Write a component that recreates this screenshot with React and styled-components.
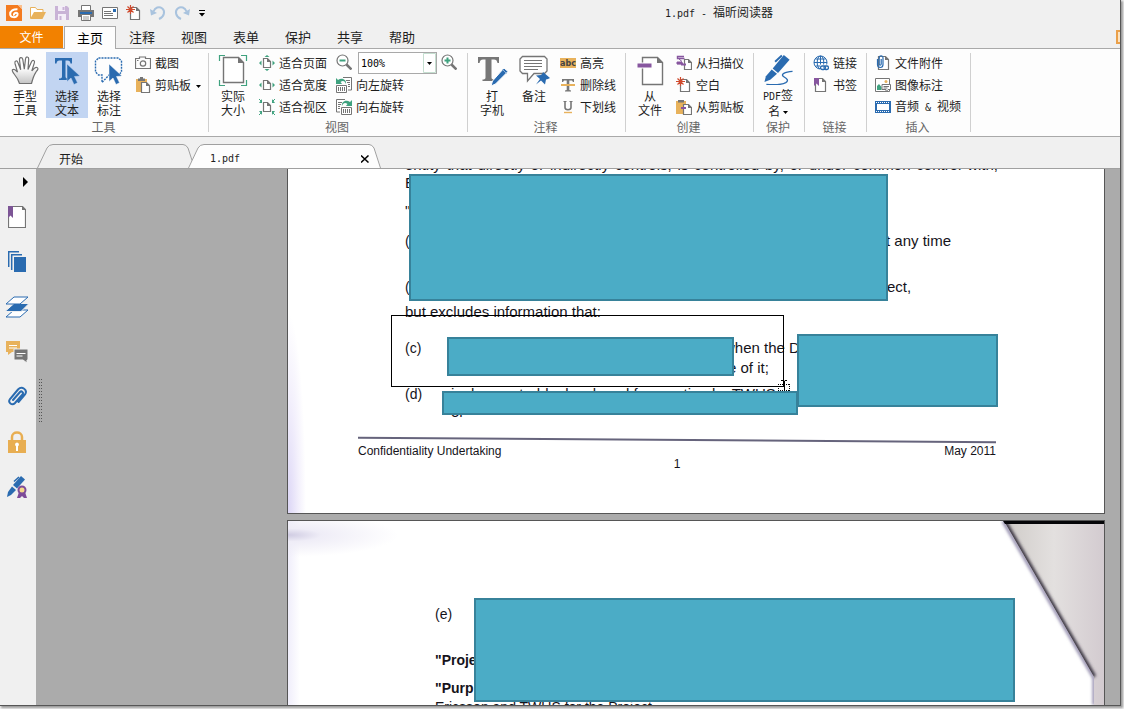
import React from 'react';
import styled, { createGlobalStyle, css } from 'styled-components';

const GlobalStyle = createGlobalStyle`
  *, *::before, *::after {
    box-sizing: border-box;
  }

  body {
    margin: 0;
    background: #f4f4f4;
    overflow: hidden;
    font-family: 'Noto Sans CJK SC', sans-serif;
    font-size: 12px;
    color: #1e1e1e;
  }

  button {
    margin: 0;
    padding: 0;
    border: none;
    background: none;
    font: inherit;
    color: inherit;
  }
`;

const green = '#3fa27f';
const blue = '#2a6bb0';
const gray = '#757575';
const tan = '#e8b25c';
const purple = '#87569f';

const Window = styled.div`
  display: flex;
  flex-direction: column;
  height: calc(100vh - 4px);
  margin: 0 4px 4px 0;
  background: #f0f0f0;
  box-shadow: 0 0 0 1px #565656, 2px 2px 2px 1px #9a9a9a;
`;

const Mono = styled.span`
  font-family: 'DejaVu Sans Mono', monospace;
  font-size: 10px;
`;

const TitleBar = styled.header`
  display: flex;
  align-items: center;
  height: 26px;
  padding-left: 2px;
`;

const QuickButton = styled.button`
  display: flex;
  align-items: center;
  justify-content: center;
  width: ${({ $narrow }) => ($narrow ? '16px' : '24px')};
  height: 24px;
`;

const Title = styled.h1`
  flex: 1;
  margin: 0;
  padding-left: 108px;
  font-size: 12px;
  font-weight: 400;
  line-height: 24px;
  text-align: center;
  white-space: pre;
`;

const MenuBar = styled.nav`
  display: flex;
  height: 22px;
`;

const MenuTab = styled.button`
  width: 52px;
  height: 22px;
  font-size: 13px;
  line-height: 22px;

  ${({ $active }) =>
    $active &&
    css`
      position: relative;
      height: 23px;
      border: 1px solid #a9a9a9;
      border-bottom: none;
      background: #fdfdfd;
      color: #000;
    `}
`;

const FileTab = styled(MenuTab)`
  width: 63px;
  margin-right: 1px;
  background: #f28100;
  color: #fff;
  font-size: 12px;
`;

const AccountBadge = styled.span`
  width: 4px;
  height: 14px;
  margin: 4px 0 0 auto;
  border: 2px solid #eaa04a;
  border-right: none;
  background: #fbe3c2;
`;

const Ribbon = styled.section`
  display: flex;
  padding-left: 1px;
  border-top: 1px solid #a9a9a9;
  border-bottom: 1px solid #a9a9a9;
  background: #fdfdfd;
`;

const Group = styled.div`
  display: flex;
  flex-direction: column;
  flex: 0 0 ${({ $width }) => $width}px;
  padding: 3px 0 0 3px;
  background: linear-gradient(#d0d0d0, #d0d0d0) right 4px / 1px 79px no-repeat;
`;

const GroupBody = styled.div`
  display: flex;
  height: 66px;
`;

const GroupLabel = styled.div`
  height: 18px;
  padding-right: 6px;
  color: #666;
  line-height: 18px;
  text-align: center;
`;

const Column = styled.div`
  display: flex;
  flex-direction: column;
`;

const BigButton = styled.button`
  display: flex;
  flex-direction: column;
  align-items: center;
  gap: 3px;
  width: 42px;
  height: 66px;
  padding-top: 2px;
  line-height: 14px;
  background: ${({ $active }) => ($active ? '#c2d5f2' : 'none')};
`;

const SmallButton = styled.button`
  display: flex;
  align-items: center;
  gap: 4px;
  height: 22px;
  padding: 0 4px 0 5px;
  line-height: 22px;
  white-space: pre;

  svg {
    flex: none;
  }
`;

const ZoomRow = styled.div`
  display: flex;
  align-items: center;
  height: 22px;
  padding-left: 5px;
`;

const ZoomBox = styled.div`
  position: relative;
  width: 79px;
  height: 22px;
  margin: 0 4px 0 6px;
  border: 1px solid #a9a9a9;
  background: #fff;

  svg {
    position: absolute;
    top: 0;
    right: 0;
    pointer-events: none;
  }
`;

const ZoomSelect = styled.select`
  width: 100%;
  height: 20px;
  padding: 0 2px;
  border: none;
  background: none;
  appearance: none;
  color: #000;
  font-family: 'DejaVu Sans Mono', monospace;
  font-size: 10px;
`;

const TabStrip = styled.div`
  display: flex;
  align-items: flex-end;
  height: 32px;
  padding-left: 37px;
  border-bottom: 1px solid #a0a0a0;
`;

const DocTabBox = styled.div`
  position: relative;
  display: flex;
  height: 24px;
  color: ${({ $active }) => ($active ? '#fdfdfd' : '#f0f0f0')};

  & + & {
    margin-left: -7px;
  }

  svg {
    display: block;
  }
`;

const DocTabBody = styled.div`
  display: flex;
  align-items: center;
  justify-content: space-between;
  width: ${({ $width }) => $width}px;
  padding: 4px 0 0 6px;
  border-top: 1px solid #a0a0a0;
  background: currentColor;

  span,
  button {
    color: #1e1e1e;
  }
`;

const Workspace = styled.main`
  display: flex;
  flex: 1;
  min-height: 0;
  background: #ababab;
`;

const Sidebar = styled.aside`
  display: flex;
  flex-direction: column;
  width: 36px;
  background: #f0f0f0;
`;

const SideButton = styled.button`
  display: flex;
  align-items: center;
  justify-content: ${({ $small }) => ($small ? 'flex-end' : 'center')};
  width: 34px;
  height: ${({ $small }) => ($small ? '25px' : '45px')};
  padding-right: ${({ $small }) => ($small ? '6px' : '0')};
`;

const Splitter = styled.div`
  width: 6px;
  padding: 210px 0 0 3px;
`;

const SplitterGrip = styled.div`
  width: 3px;
  height: 44px;
  background: repeating-linear-gradient(#555 0 1px, transparent 1px 3px);
  mask: linear-gradient(90deg, #000 1px, transparent 1px 2px, #000 2px);
`;

const Pages = styled.div`
  display: flex;
  flex: 1;
  flex-direction: column;
  align-items: flex-end;
  padding-right: 15px;
  overflow: hidden;
`;

const Page = styled.article`
  position: relative;
  width: 818px;
  overflow: hidden;
  border: 1px solid #565656;
  background: #fff;
  color: #15131a;
  font-family: 'Liberation Sans', Arial, sans-serif;
`;

const FirstPage = styled(Page)`
  flex: 0 0 345px;
  border-top: none;
  background: radial-gradient(ellipse 18px 200px at 0 100%, #dcd6f6, #f3f0fc 60%, #fff);
`;

const SecondPage = styled(Page)`
  flex: 1;
  margin-top: 6px;
  padding: 84px 0 0 147px;
  border-bottom: none;
  background: radial-gradient(ellipse 110px 22px at 0 14px, #cfcbe2, #efedf7 30%, transparent),
    linear-gradient(90deg, #f0eefb, #fff 12px);
`;

/* the first page is scrolled, its top line is cut by the tab strip */
const Body = styled.div`
  margin: -13px 106px 0 117px;
  font-size: 15px;
`;

const Line = styled.div`
  display: flex;
  height: 18px;
  margin-top: ${({ $gap = 0 }) => $gap}px;
  font-size: ${({ $small }) => ($small ? '14px' : '15px')};
  line-height: 18px;
  white-space: pre;
`;

const FullLine = styled.div`
  height: 18px;
  line-height: 18px;
  text-align: justify;
  text-align-last: justify;
`;

const Label = styled.span`
  width: 46px;
  font-size: 14px;
`;

const Fragment = styled.span`
  margin-left: ${({ $indent = 0 }) => $indent}px;
`;

const PageRule = styled.hr`
  height: 2px;
  margin: 18px 108px 0 70px;
  border: none;
  background: #66647c;
  transform: rotate(0.4deg);
`;

const PageFooter = styled.footer`
  display: flex;
  justify-content: space-between;
  align-items: flex-end;
  margin: 3px 108px 0 70px;
  font-size: 12px;
  line-height: 14px;
`;

const PageNumber = styled.div`
  margin: -1px 108px 0 70px;
  font-size: 12px;
  line-height: 14px;
  text-align: center;
`;

const Redaction = styled.div`
  position: absolute;
  left: ${({ $x }) => $x}px;
  top: ${({ $y }) => $y}px;
  width: ${({ $w }) => $w}px;
  height: ${({ $h }) => $h}px;
  border: 2px solid #37829a;
  background: #4bacc6;
`;

const Marquee = styled.div`
  position: absolute;
  left: 103px;
  top: 146px;
  width: 393px;
  height: 72px;
  border: 1px solid #000;
`;

const Pointer = styled.svg`
  position: absolute;
  left: 489px;
  top: 210px;
`;

const Fold = styled.svg`
  position: absolute;
  top: 0;
  right: 0;
`;

const InlineCaret = styled.svg`
  vertical-align: middle;
`;

const Icon = ({ size = 16, width, height, children }) => (
  <svg
    width={width || size}
    height={height || size}
    viewBox={`0 0 ${width || size} ${height || size}`}
    fill="none"
    aria-hidden="true"
  >
    {children}
  </svg>
);

const Caret = () => (
  <InlineCaret width="5" height="3" viewBox="0 0 5 3" aria-hidden="true">
    <path d="M0 0h5L2.500 3z" fill="#000" />
  </InlineCaret>
);

/* small sheet with a folded corner, shared by several icons */
const Sheet = ({ x = 4, y = 1, w = 10, h = 13, fill = '#fff' }) => (
  <>
    <path
      d={`M${x + 0.5} ${y + 0.5}h${w - 4}l3 3v${h - 4}h${-(w - 1)}z`}
      fill={fill}
      stroke={gray}
      strokeWidth="1.2"
    />
    <path d={`M${x + w - 4} ${y}v4h4z`} fill={gray} />
  </>
);

const Spark = ({ x = 4.5, y = 4.5 }) => (
  <path
    d={`M${x} ${y - 4.5}v9M${x - 4.5} ${y}h9M${x - 3} ${y - 3}l6 6M${x + 3} ${y - 3}l-6 6`}
    stroke="#cf4a2d"
    strokeWidth="1.2"
  />
);

const LogoIcon = () => (
  <Icon>
    <path d="M0 0h12l4 4v12H0z" fill="#f47b20" />
    <path d="M12 0l4 4V0z" fill="#fbbf8c" />
    <path d="M11.500 4.200C7.500 4 4 6 4.200 9.200c.2 3.600 6 4 7.300.6.500-1.400-.8-2.400-2.300-1.800-1.200.5-1.600 1.600-1 2.600" stroke="#fff" strokeWidth="2" />
  </Icon>
);

const OpenIcon = () => (
  <Icon>
    <path d="M.5 13V2.500h5l1.500 2h6V7" fill="#fff" stroke={tan} />
    <path d="M0 14L4 7h12l-3.500 7z" fill={tan} />
  </Icon>
);

const SaveIcon = () => (
  <Icon>
    <path d="M1 1h12l2 2v12H1z" fill="#c9b3d6" />
    <path d="M4 1h7v5H4zM4 9h8v6H4z" fill="#f4eef8" />
    <path d="M8.500 2h2v3h-2zM5.500 11h2v4h-2z" fill="#c9b3d6" />
  </Icon>
);

const PrintIcon = () => (
  <Icon>
    <path d="M3.500 5V.5h9V5" fill="#fff" stroke={gray} />
    <path d="M0 5h16v7H0z" fill={gray} />
    <path d="M2 7h12v2H2z" fill={blue} />
    <path d="M3.500 9.500h9v6h-9z" fill="#fff" stroke={gray} />
    <path d="M5 12h6M5 14h6" stroke="#999" />
  </Icon>
);

const MailIcon = () => (
  <Icon>
    <path d="M.5 2.500h15v11H.5z" fill="#fff" stroke={gray} />
    <path d="M2 6.500h7M2 8.500h9M2 10.500h9" stroke={gray} />
    <path d="M11 4h3v3h-3z" fill={blue} />
  </Icon>
);

const NewIcon = () => (
  <Icon>
    <Sheet x={4} y={2} w={10} h={13} />
    <Spark />
  </Icon>
);

const UndoIcon = ({ flip }) => (
  <Icon>
    <g transform={flip ? 'translate(16 0) scale(-1 1)' : undefined}>
      <path d="M3.500 6.500C5 2.500 9 1 12 3.200c3.500 2.600 2.500 8.500-3 10.800" stroke="#a9c3de" strokeWidth="2" />
      <path d="M0 4l1 6.500L7 8z" fill="#a9c3de" />
    </g>
  </Icon>
);

const CustomizeIcon = () => (
  <Icon width={6} height={7}>
    <path d="M0 0h6v1H0zM0 3h6L3 6.500z" fill="#000" />
  </Icon>
);

const HandIcon = () => (
  <Icon size={32}>
    <defs>
      <linearGradient id="hand" x1="0" y1="0" x2="0" y2="1">
        <stop offset="0.4" stopColor="#fff" />
        <stop offset="1" stopColor="#c4c4c4" />
      </linearGradient>
    </defs>
    <path
      d="M10.500 29.500c-1-4-3-6.500-5-9C4 18.600 2.500 16.700 3.500 15.700c1.300-1.200 3.500.6 5 2.500L6 9.500C5.300 6.800 8 6 8.900 8.500l2.800 7.200L10.500 6c-.3-3 2.700-3.300 3.300-.5l1.500 9.700L16.500 5c.3-2.900 3.400-2.600 3.200.3L19 15.500l3.500-7.800c1.100-2.300 3.600-1.300 2.900 1L22.800 17c2-2.500 4-4.300 5.600-3.300 1.500 1-.4 2.800-1.600 4.600-2 3-3.300 7.200-4.300 11.200z"
      fill="url(#hand)"
      stroke="#707070"
      strokeWidth="1.200"
    />
  </Icon>
);

const arrowPath = 'M16 10v17.500l4-3.500 3 6.500 3.500-1.700-3-6.300 5.500-.5z';

const SelectTextIcon = () => (
  <Icon size={32}>
    <path d="M4 4h17v5.500h-1.500c-.3-2-1-3-3-3h-2v16c0 1.500 1 2 3 2v1.500H8v-1.500c2 0 3-.5 3-2v-16H8.500c-2 0-2.700 1-3 3H4z" fill={blue} />
    <path d={arrowPath} fill={blue} stroke="#c2d5f2" strokeWidth="0.500" />
  </Icon>
);

const SelectNoteIcon = () => (
  <Icon size={32}>
    <path d="M5.500 4h20l3 3v11l-3 3H16l-7 7.500V21H5.500l-3-3V7z" stroke={blue} strokeWidth="1.400" strokeDasharray="2 1" />
    <path d={arrowPath} fill={blue} stroke="#fdfdfd" strokeWidth="0.500" />
  </Icon>
);

const CameraIcon = () => (
  <Icon>
    <path d="M4.500 3.500V2h6v1.500h5v10H.5v-10z" stroke={gray} strokeWidth="1.200" />
    <circle cx="8" cy="8.500" r="2.700" stroke={gray} strokeWidth="1.200" />
    <path d="M2 5.500h1.500" stroke={gray} />
  </Icon>
);

const ClipboardIcon = () => (
  <Icon>
    <path d="M1 2h11v13H1z" fill={tan} />
    <path d="M3 1.500h7V4H3z" fill={gray} />
    <path d="M5 0h3v2H5z" fill={gray} />
    <Sheet x={6} y={5} w={9} h={11} />
  </Icon>
);

const ActualSizeIcon = () => (
  <Icon size={32}>
    <path d="M2.500 7V1.500H8M24 1.500h5.500V7M2.500 26v5.500H8M24 31.500h5.500V26" stroke={green} strokeWidth="1.200" />
    <path d="M6.500 3.500h15l5 5v20h-20z" fill="#fff" stroke={gray} strokeWidth="1.400" />
    <path d="M21 3v6h6z" fill={gray} />
  </Icon>
);

const FitPageIcon = () => (
  <Icon>
    <Sheet x={4} y={3} w={8} h={10} />
    <path d="M5.500 2h5L8 0zM5.500 14h5L8 16zM2.500 5.500v5L0 8zM13.500 5.500v5L16 8z" fill={green} />
  </Icon>
);

const FitWidthIcon = () => (
  <Icon>
    <Sheet x={4} y={3} w={8} h={10} />
    <path d="M2.500 5.500v5L0 8zM13.500 5.500v5L16 8z" fill={green} />
  </Icon>
);

const FitVisibleIcon = () => (
  <Icon>
    <Sheet x={4} y={3} w={8} h={10} />
    <path d="M3 0v4H0zM13 0v4h3zM3 16v-4H0zM13 16v-4h3z" fill={green} />
    <path d="M0 0l2 2M16 0l-2 2M0 16l2-2M16 16l-2-2" stroke={green} />
  </Icon>
);

const ZoomIcon = ({ plus }) => (
  <Icon>
    <circle cx="6.500" cy="6.500" r="5.500" fill="#fff" stroke={gray} strokeWidth="1.200" />
    <path d="M10.500 10.500l5 5" stroke={gray} strokeWidth="2.500" />
    <path d={plus ? 'M3.500 6.500h6M6.500 3.500v6' : 'M3.500 6.500h6'} stroke={green} strokeWidth="2" />
  </Icon>
);

const RotateIcon = ({ right }) => (
  <Icon>
    <g transform={right ? 'translate(16 0) scale(-1 1)' : undefined}>
      <path d="M7 .5h8.500V13H12" fill="#fff" stroke={gray} />
      <path d="M10 3.500h4M11 5.500h3M12 7.500h2M12 9.500h2" stroke={gray} />
      <path d="M.5 8.500h10v7H.5z" fill="#fff" stroke={gray} />
      <path d="M2.500 10v4M4.500 10v4M6.500 10v4M8.500 10v4" stroke={gray} />
      <path d="M0 1v6h6L4.500 5C7 3.300 9 4 10 7c1-3.500-3.500-7-8-4z" fill={green} />
    </g>
  </Icon>
);

const TypewriterIcon = () => (
  <Icon size={32}>
    <path d="M2 3h21v6h-1.500c-.4-2.500-1.500-3.500-3.500-3.500h-2.500v18c0 1.500 1 2 3 2V27h-12v-1.500c2 0 3-.5 3-2v-18H7C5 5.500 4 6.500 3.500 9H2z" fill="#777" />
    <path d="M28 14l4 3.500L19.500 30 15 32l1.500-5z" fill={blue} stroke="#fdfdfd" />
    <path d="M26.500 15.500l4 4" stroke="#8fb5dc" />
  </Icon>
);

const NoteIcon = () => (
  <Icon size={32}>
    <path d="M4.500 2.500h22l2.500 2.500v12l-2.500 2.500H16L9.500 27v-7.500h-5L2 17V5z" fill="#fff" stroke={gray} strokeWidth="1.300" />
    <path d="M6 6.500h18M6 9.500h18M6 12.500h18M6 15.500h14" stroke={gray} />
    <path d="M25 18l7 6-2 1-2 .5-1 5-4-4-5 4 4-5.500-4-3.500 5-.5 1.500-1.500z" fill={blue} />
  </Icon>
);

const HighlightIcon = () => (
  <Icon>
    <path d="M0 3h16v10H0z" fill={tan} />
    <text x="0" y="11" fontFamily="DejaVu Sans" fontSize="8" fontWeight="700" fill="#444">
      abc
    </text>
  </Icon>
);

const StrikeIcon = () => (
  <Icon>
    <path d="M2 2h12v3h-1l-1-1.500H9.300v9.500l1.700.5v1H5v-1l1.700-.5V3.500H4L3 5H2z" fill="#777" />
    <path d="M1 8h14" stroke={tan} strokeWidth="2" />
  </Icon>
);

const UnderlineIcon = () => (
  <Icon>
    <path d="M5 2.500v6c0 3 6 3 6 0v-6" stroke="#777" strokeWidth="1.600" />
    <path d="M3.500 2.500h3M9.500 2.500h3" stroke="#777" />
    <path d="M4 13.500h8" stroke={tan} strokeWidth="1.400" />
  </Icon>
);

const FromFileIcon = () => (
  <Icon size={32}>
    <path d="M8.500 3.500h15l5 5v22h-20z" fill="#fff" stroke={gray} strokeWidth="1.400" />
    <path d="M23 3v6h6z" fill={gray} />
    <path d="M3 9h15v5H3z" fill={purple} stroke="#fdfdfd" />
  </Icon>
);

const ScannerIcon = () => (
  <Icon>
    <path d="M8 1.500H1.500v2h7M1 8.500h6" stroke={purple} strokeWidth="1.400" />
    <path d="M3 4l3 2.500M1 7h5v2H1z" fill={purple} stroke={purple} />
    <Sheet x={8} y={4} w={8} h={11} />
    <path d="M5 9.500h5" stroke={purple} strokeWidth="2" />
  </Icon>
);

const FromClipIcon = () => (
  <Icon>
    <path d="M0 2h10v13H0z" fill={tan} />
    <path d="M2 1h6v2.500H2z" fill={gray} />
    <Sheet x={7} y={5} w={9} h={11} />
    <path d="M5 9h5" stroke={purple} strokeWidth="2" />
  </Icon>
);

const SignIcon = () => (
  <Icon size={32}>
    <path d="M22 1l6 5-12 13.500-5.500-4.500z" fill={blue} />
    <path d="M9.500 16l5.500 4.500-7 6L2 29l1.500-6z" fill={blue} />
    <path d="M13 8l7-6.500" stroke={blue} strokeWidth="2" />
    <path d="M31 18c-8 .5-13 3-9 5.500 4 2.500 5 4 2 6-4 2.500-12 2.500-20 2" stroke={blue} strokeWidth="1.400" />
  </Icon>
);

const GlobeLinkIcon = () => (
  <Icon>
    <circle cx="7.500" cy="7.500" r="6.500" stroke={blue} />
    <path d="M1 7.500h13M7.500 1v13M2.500 4h10M2.500 11h6" stroke={blue} />
    <ellipse cx="7.500" cy="7.500" rx="3.300" ry="6.500" stroke={blue} />
    <path d="M7 9.500h9v6H7z" fill="#fdfdfd" />
    <rect x="7.500" y="11" width="5" height="3.500" rx="1.700" stroke={blue} strokeWidth="1.300" />
    <rect x="11" y="11" width="4.500" height="3.500" rx="1.700" stroke={blue} strokeWidth="1.300" />
  </Icon>
);

const BookmarkIcon = () => (
  <Icon>
    <Sheet x={2} y={1} w={11} h={14} />
    <path d="M1 1h5v8L3.500 6.500 1 9z" fill={purple} />
  </Icon>
);

const AttachIcon = () => (
  <Icon>
    <Sheet x={3} y={1} w={11} h={14} />
    <path d="M2.500 4v5.500c0 4 5.500 4 5.500 0V3C8 0 4.200 0 4.200 3v6c0 1.600 2 1.600 2 0V4" stroke={blue} strokeWidth="1.200" />
  </Icon>
);

const ImageNoteIcon = () => (
  <Icon>
    <path d="M.5 1.500h14v13H.5z" fill="#fff" stroke={gray} />
    <path d="M2 13V9l2-2 2.500 3v3z" fill={green} />
    <circle cx="11" cy="4.500" r="1.500" fill={tan} />
    <path d="M7 7.500h8.500v5H13L11 15v-2.500H7z" fill="#fff" stroke={gray} />
    <path d="M8.500 9.500h5.500M8.500 11h4" stroke={gray} />
  </Icon>
);

const FilmIcon = () => (
  <Icon>
    <path d="M0 2h16v12H0z" fill={blue} />
    <path d="M2 5h12v6H2z" fill="#fff" />
    <path d="M1 3.500h14M1 12.500h14" stroke="#fff" strokeDasharray="1 1" />
  </Icon>
);

const SideBookmark = () => (
  <Icon width={18} height={22}>
    <Sheet x={0} y={0} w={18} h={22} />
    <path d="M0 0h5v12L2.500 9.500 0 12z" fill="#7d5596" />
  </Icon>
);

const SidePages = () => (
  <Icon width={18} height={22}>
    <path d="M.7 16V.8H11M3.700 19V3.800H14" stroke={blue} strokeWidth="1.500" />
    <path d="M6 6h12v15H6z" fill={blue} />
  </Icon>
);

const SideLayers = () => (
  <Icon width={24} height={22}>
    <path d="M1 21L9 14h14l-8 7z" fill="#fff" stroke={blue} />
    <path d="M0 15.500L9 7.500h15l-8 8z" fill={blue} stroke="#f0f0f0" />
    <path d="M1 8L9 1h14l-8 7z" fill="#fff" stroke={blue} />
  </Icon>
);

const SideComments = () => (
  <Icon width={22} height={22}>
    <path d="M0 0h14v11H6l-4 3v-3H0z" fill={tan} />
    <path d="M3 4.500h8M3 7h8" stroke="#fff" />
    <path d="M8 8h14v11h-1v3l-4-3H8z" fill={gray} stroke="#f0f0f0" />
    <path d="M10.500 12.500h9M10.500 15h6" stroke="#fff" />
  </Icon>
);

const SideClip = () => (
  <Icon width={20} height={22}>
    <path
      d="M6 14l7-8c1.500-1.500 4 .5 2.500 2.300L8 17c-3 3-7.500-.5-5-4L11 3.500c4-4 10 .5 7 5L11.500 16"
      stroke={blue}
      strokeWidth="2"
      strokeLinecap="round"
    />
  </Icon>
);

const SideLock = () => (
  <Icon width={18} height={22}>
    <path d="M4 10V6c0-6 10-6 10 0v4" stroke="#e8ae52" strokeWidth="2.500" />
    <path d="M0 9h18v13H0z" fill="#e8ae52" />
    <path d="M9 11.500a2 2 0 011 3.700V20H8v-4.800a2 2 0 011-3.700z" fill="#fff" />
  </Icon>
);

const SideSign = () => (
  <Icon width={20} height={22}>
    <path d="M14 0l4 3.500-8 9L6 9z" fill={blue} />
    <path d="M5 10.500l4 3.500-5 5-4 2 1-5z" fill={blue} />
    <path d="M7 5.500L12 1" stroke={blue} strokeWidth="1.600" />
    <path d="M12 16l-2 6h3l2-2 2 2h3l-2-6z" fill="#7d4b99" />
    <circle cx="15" cy="14" r="3.500" fill="#f6d98a" stroke="#7d4b99" strokeWidth="2" />
  </Icon>
);

const quickTools = [
  ['福昕', LogoIcon],
  ['打开', OpenIcon],
  ['保存', SaveIcon],
  ['打印', PrintIcon],
  ['邮件', MailIcon],
  ['新建', NewIcon],
  ['撤销', UndoIcon],
];

const menus = ['主页', '注释', '视图', '表单', '保护', '共享', '帮助'];

const sideTools = [
  ['书签', SideBookmark],
  ['页面', SidePages],
  ['图层', SideLayers],
  ['注释', SideComments],
  ['附件', SideClip],
  ['安全', SideLock],
  ['签名', SideSign],
];

const RibbonGroup = ({ label, width, children }) => (
  <Group $width={width}>
    <GroupBody>{children}</GroupBody>
    <GroupLabel>{label}</GroupLabel>
  </Group>
);

const Big = ({ icon, lines, active }) => (
  <BigButton $active={active}>
    {icon}
    <span>
      {lines[0]}
      {lines[1] && <br />}
      {lines[1]}
    </span>
  </BigButton>
);

const Small = ({ icon, children }) => (
  <SmallButton>
    {icon}
    <span>{children}</span>
  </SmallButton>
);

const DocTab = ({ active, width, children }) => (
  <DocTabBox $active={active}>
    <Icon width={16} height={24}>
      <path d="M0 24L10 4Q12 .5 16 .5V24z" fill="currentColor" />
      <path d="M.5 24L10 4Q12 .5 16 .5" stroke="#a0a0a0" />
    </Icon>
    <DocTabBody $width={width}>{children}</DocTabBody>
    <Icon width={12} height={24}>
      <path d="M12 24L5 4Q3 .5 0 .5V24z" fill="currentColor" />
      <path d="M11.500 24L5 4Q3 .5 0 .5" stroke="#a0a0a0" />
    </Icon>
  </DocTabBox>
);

const App = () => (
  <>
    <GlobalStyle />
    <Window>
      <TitleBar>
        {quickTools.map(([name, Glyph]) => (
          <QuickButton key={name} aria-label={name}>
            <Glyph />
          </QuickButton>
        ))}
        <QuickButton aria-label="重做">
          <UndoIcon flip />
        </QuickButton>
        <QuickButton $narrow aria-label="自定义">
          <CustomizeIcon />
        </QuickButton>
        <Title>
          <Mono>1.pdf - </Mono>福昕阅读器
        </Title>
      </TitleBar>

      <MenuBar>
        <FileTab>文件</FileTab>
        {menus.map((menu) => (
          <MenuTab key={menu} $active={menu === '主页'}>
            {menu}
          </MenuTab>
        ))}
        <AccountBadge />
      </MenuBar>

      <Ribbon>
        <RibbonGroup label="工具" width={208}>
          <Big icon={<HandIcon />} lines={['手型', '工具']} />
          <Big icon={<SelectTextIcon />} lines={['选择', '文本']} active />
          <Big icon={<SelectNoteIcon />} lines={['选择', '标注']} />
          <Column>
            <Small icon={<CameraIcon />}>截图</Small>
            <Small icon={<ClipboardIcon />}>
              剪贴板{'  '}
              <Caret />
            </Small>
          </Column>
        </RibbonGroup>

        <RibbonGroup label="视图" width={259}>
          <Big icon={<ActualSizeIcon />} lines={['实际', '大小']} />
          <Column>
            <Small icon={<FitPageIcon />}>适合页面</Small>
            <Small icon={<FitWidthIcon />}>适合宽度</Small>
            <Small icon={<FitVisibleIcon />}>适合视区</Small>
          </Column>
          <Column>
            <ZoomRow>
              <button aria-label="缩小">
                <ZoomIcon />
              </button>
              <ZoomBox>
                <ZoomSelect aria-label="缩放" defaultValue="100%">
                  <option>100%</option>
                </ZoomSelect>
                <Icon width={13} height={20}>
                  <path d="M.5 .5h12v19H.5z" stroke="#c5dfd0" />
                  <path d="M4 9h5L6.500 12z" fill="#000" />
                </Icon>
              </ZoomBox>
              <button aria-label="放大">
                <ZoomIcon plus />
              </button>
            </ZoomRow>
            <Small icon={<RotateIcon />}>向左旋转</Small>
            <Small icon={<RotateIcon right />}>向右旋转</Small>
          </Column>
        </RibbonGroup>

        <RibbonGroup label="注释" width={158}>
          <Big icon={<TypewriterIcon />} lines={['打', '字机']} />
          <Big icon={<NoteIcon />} lines={['备注']} />
          <Column>
            <Small icon={<HighlightIcon />}>高亮</Small>
            <Small icon={<StrikeIcon />}>删除线</Small>
            <Small icon={<UnderlineIcon />}>下划线</Small>
          </Column>
        </RibbonGroup>

        <RibbonGroup label="创建" width={128}>
          <Big icon={<FromFileIcon />} lines={['从', '文件']} />
          <Column>
            <Small icon={<ScannerIcon />}>从扫描仪</Small>
            <Small icon={<NewIcon />}>空白</Small>
            <Small icon={<FromClipIcon />}>从剪贴板</Small>
          </Column>
        </RibbonGroup>

        <RibbonGroup label="保护" width={51}>
          <BigButton>
            <SignIcon />
            <span>
              <Mono>PDF</Mono>签
              <br />名 <Caret />
            </span>
          </BigButton>
        </RibbonGroup>

        <RibbonGroup label="链接" width={62}>
          <Column>
            <Small icon={<GlobeLinkIcon />}>链接</Small>
            <Small icon={<BookmarkIcon />}>书签</Small>
          </Column>
        </RibbonGroup>

        <RibbonGroup label="插入" width={104}>
          <Column>
            <Small icon={<AttachIcon />}>文件附件</Small>
            <Small icon={<ImageNoteIcon />}>图像标注</Small>
            <Small icon={<FilmIcon />}>
              音频<Mono> &amp; </Mono>视频
            </Small>
          </Column>
        </RibbonGroup>
      </Ribbon>

      <TabStrip>
        <DocTab width={130}>
          <span>开始</span>
        </DocTab>
        <DocTab width={165} active>
          <Mono>1.pdf</Mono>
          <button aria-label="关闭">
            <Icon width={8} height={8}>
              <path d="M0 .5l7.500 7M7.500 .5L0 7.500" stroke="#000" strokeWidth="1.500" />
            </Icon>
          </button>
        </DocTab>
      </TabStrip>

      <Workspace>
        <Sidebar>
          <SideButton $small aria-label="展开">
            <Icon width={5} height={10}>
              <path d="M0 0l5 5-5 5z" fill="#000" />
            </Icon>
          </SideButton>
          {sideTools.map(([name, Glyph]) => (
            <SideButton key={name} aria-label={name}>
              <Glyph />
            </SideButton>
          ))}
        </Sidebar>
        <Splitter>
          <SplitterGrip />
        </Splitter>

        <Pages>
          <FirstPage>
            <Body>
              <FullLine>
                entity that directly or indirectly controls, is controlled by, or under common
                control with,
              </FullLine>
              <Line>E</Line>
              <Line $gap={10}>"</Line>
              <Line $gap={12}>
                <Label>(</Label>
                <Fragment $indent={435}>t any time</Fragment>
              </Line>
              <Line $gap={28}>
                <Label>(</Label>
                <Fragment $indent={436}>ect,</Fragment>
              </Line>
              <Line $gap={7}>but excludes information that:</Line>
              <Line $gap={18}>
                <Label>(c)</Label>
                <Fragment $indent={273}>when the D</Fragment>
              </Line>
              <Line $gap={2}>
                <Label />
                <Fragment $indent={277}>e of it;</Fragment>
              </Line>
              <Line $gap={8}>
                <Label>(d)</Label>
                <Fragment>is demonstrably developed from action by TWUS and</Fragment>
              </Line>
              <Line>
                <Label />
                <Fragment>or</Fragment>
              </Line>
            </Body>
            <PageRule />
            <PageFooter>
              <span>Confidentiality Undertaking</span>
              <span>May 2011</span>
            </PageFooter>
            <PageNumber>1</PageNumber>

            <Redaction $x={121} $y={5} $w={479} $h={127} />
            <Redaction $x={159} $y={168} $w={287} $h={39} />
            <Redaction $x={154} $y={222} $w={356} $h={24} />
            <Redaction $x={509} $y={165} $w={201} $h={73} />
            <Marquee />
            <Pointer width="14" height="14" viewBox="0 0 14 14" fill="none">
              <path d="M4 1.500h2l1 1 1-1h2M7.500 2v10" stroke="#000" />
              <path d="M1 5.500h12M1 11.500h12M1.500 5v7M12.500 5v7" stroke="#000" strokeDasharray="1 1" />
            </Pointer>
          </FirstPage>

          <SecondPage>
            <Line $small>(e)</Line>
            <Line $small $gap={28}>
              <b>"Proje</b>
            </Line>
            <Line $small $gap={10}>
              <b>"Purp</b>
            </Line>
            <Line $small $gap={1}>
              Ericsson and TWUS for the Project.
            </Line>
            <Redaction $x={186} $y={77} $w={541} $h={104} />
            <Fold width="104" height="184" viewBox="0 0 104 184" fill="none">
              <defs>
                <linearGradient id="scan" x1="0" y1="0" x2="1" y2="0">
                  <stop offset="0" stopColor="#cfcbc8" />
                  <stop offset="0.5" stopColor="#e3e0df" />
                  <stop offset="1" stopColor="#d3cbd0" />
                </linearGradient>
                <filter id="soft" x="-20%" y="-20%" width="140%" height="140%">
                  <feGaussianBlur stdDeviation="1.500" />
                </filter>
                <clipPath id="corner">
                  <path d="M4 0h100v184H94v-28z" />
                </clipPath>
              </defs>
              <path d="M3 0L94 157v27" stroke="#8d86a8" strokeWidth="3" filter="url(#soft)" />
              <path d="M4 0h100v184H94v-28z" fill="url(#scan)" />
              <g clipPath="url(#corner)">
                <path d="M4 0L94 156" stroke="#3c3744" strokeWidth="5" filter="url(#soft)" />
                <path d="M94 157v30" stroke="#8b8290" strokeWidth="3" filter="url(#soft)" />
              </g>
              <path d="M3 0h101v3H5z" fill="#050508" />
            </Fold>
          </SecondPage>
        </Pages>
      </Workspace>
    </Window>
  </>
);

export default App;
